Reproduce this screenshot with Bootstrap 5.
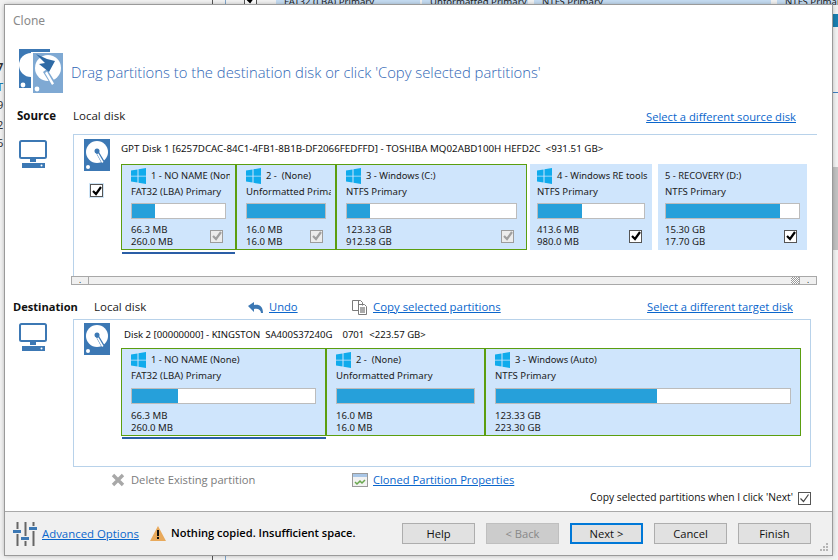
<!DOCTYPE html>
<html lang="en"><head><meta charset="utf-8"><title>Clone</title>
<link href="https://cdn.jsdelivr.net/npm/bootstrap@5.3.0/dist/css/bootstrap.min.css" rel="stylesheet">
<style>
html,body{height:100%;margin:0}
body{width:838px;height:560px;overflow:hidden;position:relative;background:#f2f2f2;font-family:"Noto Sans","Open Sans",sans-serif;font-size:11px;color:#1a1a1a}
.bk{position:absolute;white-space:nowrap}
.bk-line{top:0;height:560px;width:1px;background:#555}
.bk-blue{top:0;height:5px;background:#c5dcf2}
.bk-t{top:-5px;font-size:9.600px;line-height:14px;color:#222}
.bk-l{left:-3px;font-size:11px;line-height:13px;color:#333}
.bk-r{left:832px;width:6px}
.dlg{position:relative;margin:5px 0 0 5px;width:827px;height:550px;background:#fff;outline:1px solid #9a9a9a;box-shadow:0 0 5px rgba(0,0,0,.35);display:flex;flex-direction:column}
.ttl{height:32px;padding:8px 0 0 8px;line-height:16px;font-size:12px;color:#8a8a8a}
.hd{height:44px;margin:12px 0 0 14px;display:flex;align-items:center;gap:8px}
.hd-t{font-size:14.800px;color:#2f66b5;font-family:"Open Sans",sans-serif;font-weight:300;margin-top:2px}
.lbl{height:16px;line-height:16px;font-size:11.500px;font-family:"Open Sans",sans-serif;white-space:nowrap}
.src-row{margin-top:15px;position:relative}
.src-row b,.dst-row b{font-weight:700;color:#111}
.src-l{width:68px;padding-left:12px}
.dst-row b{font-size:11.100px}
.lk{color:#0a66cc;text-decoration:underline;font-size:11.200px}
.lk-w{font-size:11.400px}
.dst-row{margin-top:14px;margin-left:8px}
.ic-u{margin-right:5px;flex:none}
.ic-c{margin-right:5px;flex:none}
.pn{display:flex;margin-left:0}
.mon{width:68px;padding-left:14px;flex:none}
.mon svg{display:block}
.mon-s{padding-top:6px}
.mon-d{padding-top:4px}
.src-pn{margin-top:10px;height:142px}
.src-box{width:744px;height:142px;border-top:1px solid #b8d2ea;border-left:1px solid #b8d2ea;display:flex}
.dst-box{width:738px;height:148px;border:1px solid #b8d2ea;display:flex}
.dleft{width:47px;flex:none;padding-left:10px}
.dsk{display:block}
.src-box .dsk{margin-top:4px}
.dst-box .dsk{margin-top:3px}
.ck{display:flex;align-items:center;justify-content:center;border:1px solid #555;background:#fff;width:13px;height:13px;flex:none}
.ck svg{display:block}
.ck-src{margin:13px 0 0 6px;outline:1px solid #cfe5f7;width:13px;height:13px}
.ck-dis{border-color:#9c9c9c;background:#ececec}
.dt{height:29px;line-height:14px;padding-top:7px;white-space:nowrap;font-size:9.770px;color:#111}
.dst-box .dt{height:28px;padding:8px 0 0 3px;font-size:9.570px}
.prow{display:flex}
.gap3{margin-left:3px}.gap6{margin-left:6px}
.pt{background:#cfe5fc;height:86px;padding:0 7px;overflow:hidden;flex:none;display:flex;flex-direction:column;font-size:9.600px;line-height:12px;color:#1b1b1b;white-space:nowrap}
.pt.sel{border:1px solid #5b9e0f;padding:0 9px}
.pt.lg{height:88px}
.nm{display:flex;align-items:center;gap:5px;height:16px;margin-top:4px;margin-right:-4px;overflow:hidden;font-size:9.350px}
.nm svg{flex:none}
.sel .nm{margin-top:3px}
.ty{height:12px;margin-top:2px;margin-right:-5px;overflow:hidden}
.br{height:16px;margin-top:5px;border:1px solid #bcbcbc;background:#fff;flex:none}
.lg .br{margin-top:6px}
.bf{height:100%;background:#26a0da}
.sz{display:flex;justify-content:space-between;align-items:center;margin-top:5px;padding-right:3px}
.lg .sz{margin-top:6px}
.under{height:2px;background:#2a5ea6;width:113px;margin:2px 0 0 1px}
.dst-box .under{width:204px;margin-top:1px}
.sb{margin:0 0 0 66px;width:746px;height:9px;border:1px solid #a8a8a8;background:#f0f0f0;display:flex;justify-content:space-between;font-size:8px;line-height:5px;text-align:center}
.sb-b{width:17px;background:#f0f0f0;border-right:1px solid #a8a8a8;color:#111}
.sb-c{display:flex}
.sb-h{width:8px;background:repeating-conic-gradient(#999 0 25%,#fff 0 50%) 0 0/2px 2px}
.sb-r{border-right:0;border-left:1px solid #a8a8a8}
.ac{height:16px;margin-top:5px;display:flex;align-items:center;font-size:11.200px;font-family:"Open Sans",sans-serif;white-space:nowrap}
.del{margin-left:106px;width:241px;display:flex;align-items:center;gap:6px;color:#7b7b7b}
.cpr{display:flex;align-items:center;gap:5px}
.cc{height:16px;margin-top:2px;display:flex;justify-content:flex-end;align-items:center;gap:5px;padding-right:21px;font-size:10.300px;font-family:"Open Sans",sans-serif;color:#111}
.ft{flex:1;margin-top:5px;border-top:1px solid #a9a9a9;background:#f0f0f0;display:flex;align-items:center;padding:0 21px 0 8px;position:relative;font-family:"Open Sans",sans-serif}
.warn{margin-left:11px;display:flex;align-items:center;gap:5px;font-weight:600;font-size:11.100px;color:#000;white-space:nowrap}
.bts{margin-left:auto;display:flex;gap:11px}
.b8n{width:73px;height:21px;padding:0;font-size:11.200px;line-height:17px;border:1px solid #adadad;border-radius:0;background:#e1e1e1;color:#111;font-family:"Open Sans",sans-serif;box-shadow:none}
.b8n:disabled{background:#ccc;border-color:#bfbfbf;color:#888;opacity:1}
.b8n.nx{border:2px solid #0078d7;line-height:15px}
.grip{position:absolute;right:3px;bottom:3px}
.ac .lk,.ft .lk{white-space:nowrap}
</style></head><body>
<div class="bk bk-line" style="left:212px"></div>
<div class="bk bk-line" style="left:225px;background:#7fa6cc"></div>
<div class="bk bk-blue" style="left:276px;width:144px"></div>
<div class="bk bk-blue" style="left:422px;width:106px"></div>
<div class="bk bk-blue" style="left:534px;width:237px"></div>
<div class="bk bk-blue" style="left:777px;width:61px"></div>
<div class="bk bk-t" style="left:284px">FAT32 (LBA) Primary</div>
<div class="bk bk-t" style="left:430px">Unformatted Primary</div>
<div class="bk bk-t" style="left:542px">NTFS Primary</div>
<div class="bk bk-t" style="left:785px">NTFS Primary</div>
<div class="bk ck" style="left:244px;top:-8px"><svg width="10" height="10" viewBox="0 0 10 10"><path d="M1 5l3 3 5-7" fill="none" stroke="#000" stroke-width="2"/></svg></div>
<div class="bk bk-l" style="top:60px;font-weight:700">7</div>
<div class="bk bk-l" style="top:80px;color:#1a7fb0">T</div>
<div class="bk bk-l" style="top:98px">9</div>
<div class="bk bk-l" style="top:118px">2</div>
<div class="bk bk-l" style="top:136px">6</div>
<div class="bk bk-r" style="top:14px;height:13px;background:#1a7fb0"></div>
<div class="bk bk-r" style="top:92px;height:1px;background:#3f7fc0"></div>
<div class="bk bk-r" style="top:167px;height:83px;background:#c2c2c2"></div>

<div class="dlg">
 <div class="ttl">Clone</div>
 <div class="hd">
  <svg width="44" height="44" viewBox="0 0 44 44"><path d="M0 0h31v39H0z" fill="#3c78b4"/><circle cx="12" cy="16" r="12" fill="#fff"/><circle cx="4" cy="36" r="2.400" fill="#fff"/><path d="M12 3h32v41H12z" fill="#fff"/><path d="M14 4h30v40H14z" fill="#7fa9d3"/><circle cx="29" cy="19" r="13" fill="#fff"/><circle cx="18" cy="40" r="2.400" fill="#fff"/><path d="M24 23l4-3 10 16-4 3z" fill="#7fa9d3"/><path d="M26 24l2-1.500 7 12-2 1.500z" fill="#fff"/><path d="M17 5l11 5 8 2-6 11-10-8 6-1z" fill="#2e6aa5"/></svg>
  <div class="hd-t">Drag partitions to the destination disk or click 'Copy selected partitions'</div>
 </div>
 <div class="lbl src-row d-flex"><div class="src-l"><b>Source</b></div><div>Local disk</div><a class="lk ms-auto" style="margin-right:36px;margin-top:1px" href="#">Select a different source disk</a></div>
 <div class="pn src-pn">
  <div class="mon mon-s"><svg width="29" height="29" viewBox="0 0 29 29"><rect x="1" y="1" width="26" height="17" rx="1.500" fill="none" stroke="#3c78b4" stroke-width="2"/><path d="M11 19h6v3h-6zM3 23h23v5H3z" fill="#3c78b4"/><circle cx="22.500" cy="25.500" r="1" fill="#fff"/></svg></div>
  <div class="src-box">
   <div class="dleft">
    <svg class="dsk" width="26" height="32" viewBox="0 0 26 32"><use href="#dk"/></svg>
    <div class="ck ck-src"><svg width="10" height="10" viewBox="0 0 10 10"><use href="#ck"/></svg></div>
   </div>
   <div>
    <div class="dt">GPT Disk 1 [6257DCAC-84C1-4FB1-8B1B-DF2066FEDFFD] - TOSHIBA MQ02ABD100H HEFD2C&nbsp; &lt;931.51 GB&gt;</div>
    <div class="prow">
     <div>
      <div class="pt sel" style="width:115px"><div class="nm"><svg width="15" height="16" viewBox="0 0 15 16"><use href="#wn"/></svg>1 - NO NAME (None)</div><div class="ty">FAT32 (LBA) Primary</div><div class="br"><div class="bf" style="width:24.500%"></div></div><div class="sz"><span>66.3 MB<br>260.0 MB</span><span class="ck ck-dis"><svg width="10" height="10" viewBox="0 0 10 10"><use href="#cg"/></svg></span></div></div>
      <div class="under"></div>
     </div>
     <div class="pt sel" style="width:100px"><div class="nm"><svg width="15" height="16" viewBox="0 0 15 16"><use href="#wn"/></svg>2 -&nbsp; (None)</div><div class="ty">Unformatted Primary</div><div class="br"><div class="bf" style="width:100%"></div></div><div class="sz"><span>16.0 MB<br>16.0 MB</span><span class="ck ck-dis"><svg width="10" height="10" viewBox="0 0 10 10"><use href="#cg"/></svg></span></div></div>
     <div class="pt sel" style="width:191px"><div class="nm"><svg width="15" height="16" viewBox="0 0 15 16"><use href="#wn"/></svg>3 - Windows (C:)</div><div class="ty">NTFS Primary</div><div class="br"><div class="bf" style="width:13.500%"></div></div><div class="sz"><span>123.33 GB<br>912.58 GB</span><span class="ck ck-dis"><svg width="10" height="10" viewBox="0 0 10 10"><use href="#cg"/></svg></span></div></div>
     <div class="pt gap3" style="width:122px"><div class="nm"><svg width="15" height="16" viewBox="0 0 15 16"><use href="#wn"/></svg>4 - Windows RE tools (E:)</div><div class="ty">NTFS Primary</div><div class="br"><div class="bf" style="width:41.500%"></div></div><div class="sz"><span>413.6 MB<br>980.0 MB</span><span class="ck"><svg width="10" height="10" viewBox="0 0 10 10"><use href="#ck"/></svg></span></div></div>
     <div class="pt gap6" style="width:149px"><div class="nm">5 - RECOVERY (D:)</div><div class="ty">NTFS Primary</div><div class="br"><div class="bf" style="width:86%"></div></div><div class="sz"><span>15.30 GB<br>17.70 GB</span><span class="ck"><svg width="10" height="10" viewBox="0 0 10 10"><use href="#ck"/></svg></span></div></div>
    </div>
   </div>
  </div>
 </div>
 <div class="sb"><div class="sb-b">.</div><div class="sb-c"><div class="sb-h"></div><div class="sb-b sb-r">.</div></div></div>
 <div class="lbl dst-row d-flex align-items-center"><b style="width:81px">Destination</b><span style="width:153px">Local disk</span>
  <svg class="ic-u" width="17" height="13" viewBox="0 0 17 13"><path d="M1 5l6-4v3c5-1 9 1 9 8h-2c0-3-3-5-7-4v3z" fill="#3c78b4"/></svg><a class="lk" style="width:82px" href="#">Undo</a>
  <svg class="ic-c" width="17" height="16" viewBox="0 0 17 16"><path d="M1.500 1.500h6v10h-6zM4.500 1.500h5l2 2v3M7.500 5.500h6l2 2v8h-8z" fill="#fff" stroke="#7b7b7b"/><path d="M9 9h5M9 11h5M9 13h5" stroke="#555"/></svg><a class="lk lk-w" href="#">Copy selected partitions</a>
  <a class="lk ms-auto" style="margin-right:39px" href="#">Select a different target disk</a></div>
 <div class="pn mt-1">
  <div class="mon mon-d"><svg width="29" height="29" viewBox="0 0 29 29"><rect x="1" y="1" width="26" height="17" rx="1.500" fill="none" stroke="#3c78b4" stroke-width="2"/><path d="M11 19h6v3h-6zM3 23h23v5H3z" fill="#3c78b4"/><circle cx="22.500" cy="25.500" r="1" fill="#fff"/></svg></div>
  <div class="dst-box">
   <div class="dleft"><svg class="dsk" width="26" height="32" viewBox="0 0 26 32"><use href="#dk"/></svg></div>
   <div>
    <div class="dt">Disk 2 [00000000] - KINGSTON&nbsp; SA400S37240G&nbsp; &nbsp; 0701&nbsp; &lt;223.57 GB&gt;</div>
    <div class="prow">
     <div>
      <div class="pt sel lg" style="width:205px"><div class="nm"><svg width="15" height="16" viewBox="0 0 15 16"><use href="#wn"/></svg>1 - NO NAME (None)</div><div class="ty">FAT32 (LBA) Primary</div><div class="br"><div class="bf" style="width:25%"></div></div><div class="sz"><span>66.3 MB<br>260.0 MB</span></div></div>
      <div class="under"></div>
     </div>
     <div class="pt sel lg" style="width:159px"><div class="nm"><svg width="15" height="16" viewBox="0 0 15 16"><use href="#wn"/></svg>2 -&nbsp; (None)</div><div class="ty">Unformatted Primary</div><div class="br"><div class="bf" style="width:100%"></div></div><div class="sz"><span>16.0 MB<br>16.0 MB</span></div></div>
     <div class="pt sel lg" style="width:316px"><div class="nm"><svg width="15" height="16" viewBox="0 0 15 16"><use href="#wn"/></svg>3 - Windows (Auto)</div><div class="ty">NTFS Primary</div><div class="br"><div class="bf" style="width:54.700%"></div></div><div class="sz"><span>123.33 GB<br>223.30 GB</span></div></div>
    </div>
   </div>
  </div>
 </div>
 <div class="ac">
  <div class="del"><svg width="14" height="14" viewBox="0 0 14 14"><path d="M2 2l10 10M12 2L2 12" stroke="#a8a8a8" stroke-width="3.400"/></svg>Delete Existing partition</div>
  <div class="cpr"><svg width="16" height="14" viewBox="0 0 16 14"><rect x=".5" y=".5" width="15" height="13" fill="#f2f2f2" stroke="#9a9a9a"/><path d="M1 1h14v3H1z" fill="#a9c6e6"/><path d="M3 9l2 2 3-3 2 2 3-3" fill="none" stroke="#6aa84f" stroke-width="1.500"/></svg><a class="lk" href="#">Cloned Partition Properties</a></div>
 </div>
 <div class="cc">Copy selected partitions when I click 'Next'<span class="ck"><svg width="11" height="11" viewBox="0 0 11 11"><path d="M1.500 5.500l3 3 5-7" fill="none" stroke="#444" stroke-width="1.200"/></svg></span></div>
 <div class="ft">
  <svg width="24" height="24" viewBox="0 0 24 24"><path d="M4.500 0v24M12.500 0v24M20.500 0v24" stroke="#666" stroke-width="2"/><path d="M0 7h8v5H0zM8 14h8v5H8zM16 4h8v5h-8z" fill="#f0f0f0"/><path d="M0 8h8v3H0zM8 15h8v3H8zM16 5h8v3h-8z" fill="#3c78b4"/></svg>
  <a class="lk lk-w" href="#" style="margin-left:5px">Advanced Options</a>
  <div class="warn"><svg width="16" height="16" viewBox="0 0 16 16"><path d="M8 1l8 15H0z" fill="#e8a95b"/><path d="M7 5h2v6H7zM7 12h2v2H7z" fill="#111"/></svg>Nothing copied. Insufficient space.</div>
  <div class="bts"><button class="btn b8n">Help</button><button class="btn b8n" disabled>&lt; Back</button><button class="btn b8n nx">Next &gt;</button><button class="btn b8n">Cancel</button><button class="btn b8n">Finish</button></div>
  <svg class="grip" width="10" height="10" viewBox="0 0 10 10"><path d="M7 1h2v2H7zM4 4h2v2H4zM7 4h2v2H7zM1 7h2v2H1zM4 7h2v2H4zM7 7h2v2H7z" fill="#b5b5b5"/></svg>
 </div>
</div>
<svg width="0" height="0" class="position-absolute"><defs>
 <g id="wn"><path d="M0 2.500l6.500-1v6.200H0zM7.500 1.300L15 0v7.700H7.500zM0 8.500h6.500v6.100L0 13.600zM7.500 8.500H15V16l-7.500-1.200z" fill="#10abec"/></g>
 <g id="dk"><path d="M0 0h26v32H0z" fill="#3c78b4"/><circle cx="13" cy="13" r="11" fill="#fff"/><circle cx="13" cy="12" r="2.500" fill="#3c78b4"/><path d="M12 14l3-1 6 10-3 2z" fill="#3c78b4"/><path d="M13 15l1.500-.6 5 8.600-1.500 1z" fill="#fff"/><circle cx="4" cy="28" r="2" fill="#fff"/></g>
 <path id="ck" d="M1 5l3 3 5-7" fill="none" stroke="#000" stroke-width="2.200"/>
 <path id="cg" d="M1 5l3 3 5-7" fill="none" stroke="#a0a0a0" stroke-width="2.200"/>
</defs></svg>
<script src="https://cdn.jsdelivr.net/npm/bootstrap@5.3.0/dist/js/bootstrap.bundle.min.js"></script>
</body></html>
